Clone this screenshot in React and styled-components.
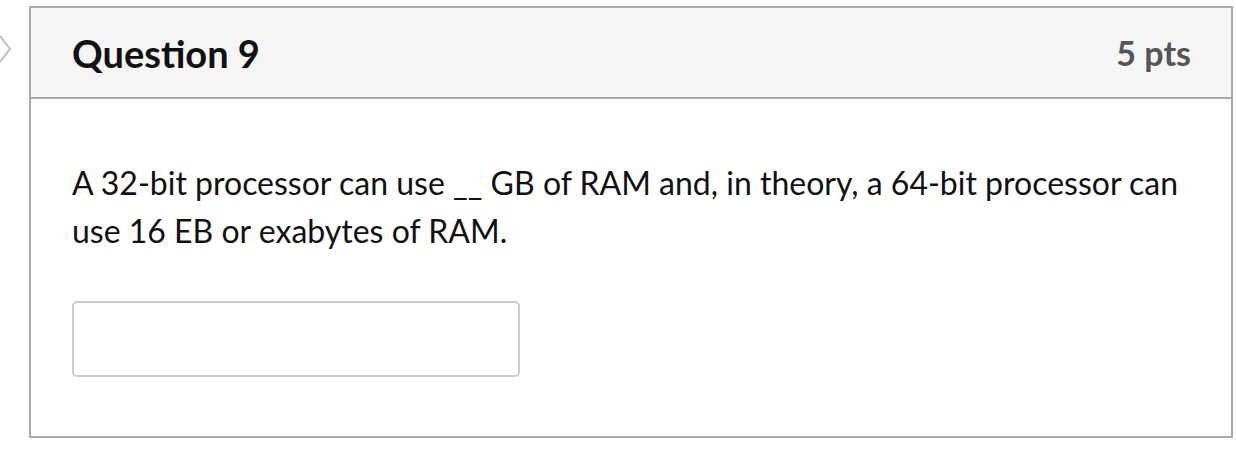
import React from "react";
import styled, { createGlobalStyle } from "styled-components";

const GlobalStyle = createGlobalStyle`
  body {
    margin: 0;
    background: #ffffff;
    font-family: Lato, "Liberation Sans", sans-serif;
  }
`;

function App() {
  return (
    <>
      <GlobalStyle />
      <Page>
        <Chevron viewBox="0 0 14 30" aria-hidden="true">
          <path d="M1 2 L11 15 L1 28" fill="none" stroke="#b4c2d0" strokeWidth="2" />
        </Chevron>
        <Card>
          <Header>
            <Title>Question 9</Title>
            <Points>5 pts</Points>
          </Header>
          <Body>
            <Prompt>
              A 32-bit processor can use __ GB of RAM and, in theory, a 64-bit processor can
              use 16 EB or exabytes of RAM.
            </Prompt>
            <Answer type="text" />
          </Body>
        </Card>
      </Page>
    </>
  );
}

const Page = styled.div`
  display: flex;
  align-items: flex-start;
  padding-top: 6px;
`;

const Chevron = styled.svg`
  width: 14px;
  height: 30px;
  margin-top: 28px;
  margin-left: -1px;
  margin-right: 16px;
  flex-shrink: 0;
`;

const Card = styled.section`
  width: 1204px;
  border: 2px solid #aaaaaa;
  box-sizing: border-box;
`;

const Header = styled.header`
  display: flex;
  justify-content: space-between;
  align-items: center;
  height: 89px;
  padding: 0 40px 0 41px;
  background: #f5f5f5;
  border-bottom: 2px solid #aaaaaa;
`;

const Title = styled.h2`
  margin: 0;
  font-size: 38px;
  font-weight: 700;
  color: #111111;
`;

const Points = styled.span`
  font-size: 34px;
  font-weight: 700;
  color: #555555;
`;

const Body = styled.div`
  padding: 60px 41px 59px;
`;

const Prompt = styled.p`
  margin: 0 0 46px;
  font-size: 32px;
  line-height: 48px;
  color: #111111;
`;

const Answer = styled.input`
  display: block;
  width: 448px;
  height: 76px;
  box-sizing: border-box;
  border: 2px solid #cccccc;
  border-radius: 5px;
  background: #ffffff;
`;

export default App;
